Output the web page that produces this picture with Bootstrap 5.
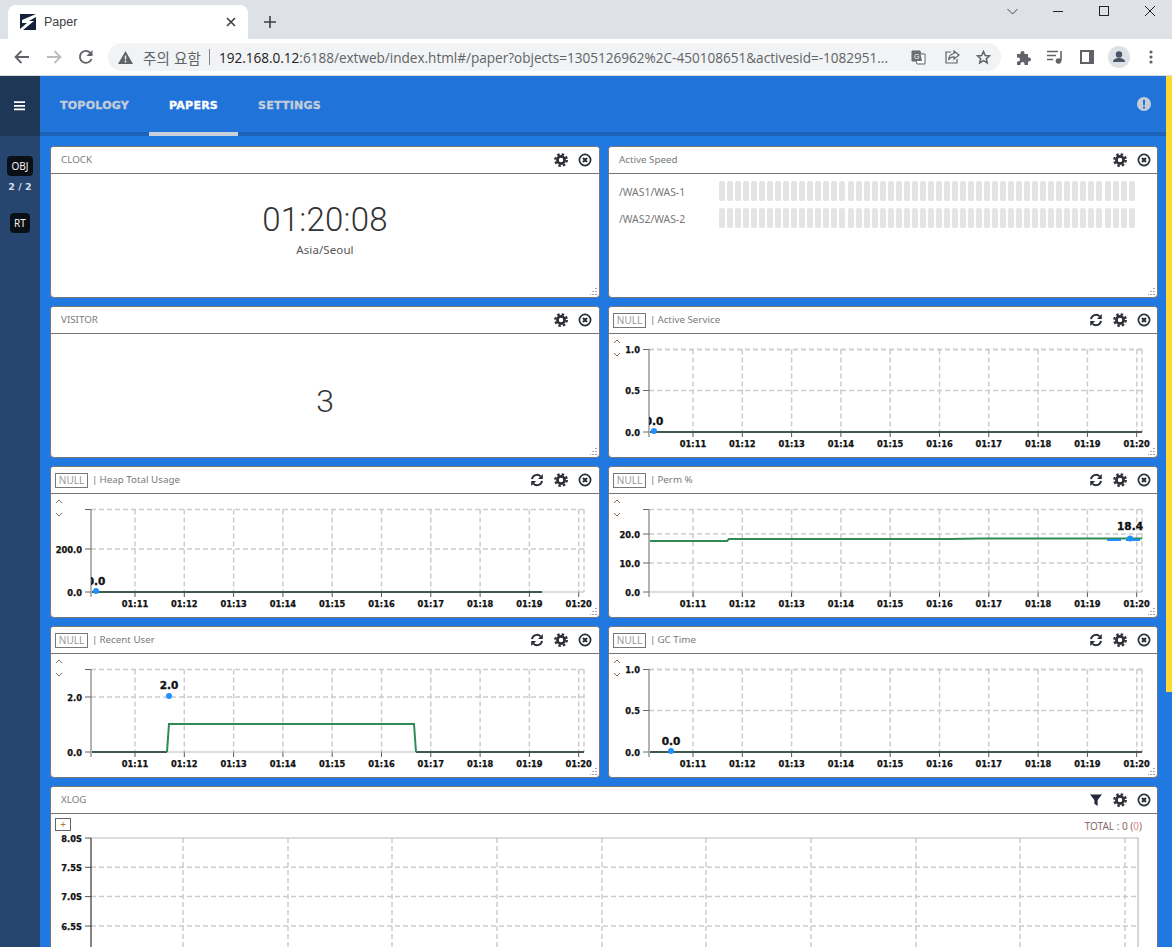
<!DOCTYPE html>
<html lang="ko">
<head>
<meta charset="utf-8">
<title>Paper</title>
<link href="https://cdn.jsdelivr.net/npm/bootstrap@5.3.0/dist/css/bootstrap.min.css" rel="stylesheet">
<style>
html,body{height:947px;overflow:hidden}
body{font-family:"Noto Sans","Liberation Sans",sans-serif;background:#2079e0;color:#333}
.tabstrip{height:39px;background:#dee1e6;position:relative}
.browser-tab{width:240px;height:34px;margin:5px 0 0 8px;background:#fff;border-radius:8px 8px 0 0;padding:0 8px 0 12px;font:12.5px "Liberation Sans",sans-serif;color:#3c4043}
.newtab{margin-left:16px}
.winbtns{margin-left:auto}
.winbtn{width:46px;height:22px;display:flex;align-items:center;justify-content:center;padding-left:2px}
.toolbar{height:37px;background:#fff;border-bottom:1px solid #dadce0;padding:0 0 0 6px}
.tbtn{width:32px;height:28px;display:flex;align-items:center;justify-content:center;flex:none}
.omnibox{width:893px;height:28px;margin:0 6px 0 6px;background:#f1f3f4;border-radius:14px;padding:0 2px 0 10px;font:14px "Open Sans","Noto Sans CJK KR",sans-serif;color:#5f6368;white-space:nowrap}
.warn-label{font-family:"Noto Sans CJK KR",sans-serif;font-size:14.5px;margin-left:10px;letter-spacing:.1px}
.sep{width:1px;height:16px;background:#80868b;margin:0 9px 0 8px}
.urltext{width:675px;overflow:hidden;letter-spacing:-.02px;font-size:13.6px}
.urltext b{font-weight:400;color:#202124}
.omni-icons{margin-left:auto}
.share-ic{margin-left:19px}
.appwrap{height:871px;overflow:hidden}
.sidebar{width:40px;background:#264670;flex:none}
.menu-toggle{height:60px;background:#1f3757}
.obj-badge{background:#0a0f16;color:#f2f2f2;font-size:10px;border-radius:4px;height:20px;display:flex;align-items:center;justify-content:center;font-family:"Noto Sans",sans-serif}
.obj-w{width:26px;margin:20px auto 0}
.rt-w{width:20px;margin:20px auto 0}
.obj-count{font:700 9.5px "DejaVu Sans",sans-serif;color:#d8dee8;text-align:center;margin-top:5px;height:12px;line-height:12px}
.mainarea{flex:1;min-width:0;overflow:hidden}
.topnav{height:60px;background:#2074d9;border-bottom:4px solid #1c63b8;padding:0}
.toplink{display:block;height:60px;padding:0 20px;font:800 11px/59px "DejaVu Sans",sans-serif;letter-spacing:.25px;-webkit-text-stroke:.35px currentColor;color:#c3ccd9;text-decoration:none;position:relative}
.toplink.cur{color:#fff;border-bottom:4px solid #c8d0dc}
.alertdot{margin:21px 15px 0 auto}
.stripe{width:6px;height:616px;background:#fdd835;flex:none}
.paper-area{padding:10px 8px 0 10px}
.sheet{height:152px;border:1px solid #777;border-radius:4px;background:#fff;overflow:hidden;position:relative}
.sheet-head{height:27px;border-bottom:1px solid #777;background:#fff;padding:0 7px 0 10px;font-size:9.8px;color:#7a7a7a;border-radius:0}
.col-6:nth-child(even) .sheet-head,.col-12 .sheet-head{padding-right:6px}
.sheet-head.hasnull{padding-left:4px}
.nullbtn{border:1px solid #777;height:15px;width:33px;font-size:10px;line-height:13px;text-align:center;color:#999;margin-right:4px}
.bar-sep{margin-right:2px;color:#777}
.iconset{margin-left:auto;gap:10px}
.hicon{width:14px;height:14px;display:block}
.grip{position:absolute;right:2px;bottom:2px;width:7px;height:7px}
.clockface{height:123px;text-align:center;padding-top:27px}
.clocktime{font:300 33px/38px Roboto,sans-serif;color:#333;letter-spacing:.25px}
.clockzone{font-size:11.5px;color:#555;margin-top:4px;line-height:14px;letter-spacing:.1px}
.visitorval{font:300 32px/38px Roboto,sans-serif;color:#333;text-align:center;padding-top:48px}
.speedrow{height:20px;margin-bottom:7px;padding-left:10px;font-size:10.4px;color:#777}
.speedlabel{width:100px;flex:none;padding-top:4px}
.speedbars{width:416px;height:20px;justify-content:space-between}
.speedbars i{display:block;width:6px;height:20px;border-radius:2px;background:#e4e4e4}
.speedlist{padding-top:7px}
.plotbox{height:123px;position:relative}
.plotsvg{display:block;position:absolute;left:0;top:0}
.plotsvg text{font:700 8.3px "DejaVu Sans",sans-serif;fill:#111;stroke:#111;stroke-width:.25px}
.plotsvg text.big{font-size:10.5px;stroke-width:.35px}
.updown{position:absolute;left:4px;top:3px;width:8px}
.xlog-sheet{height:400px}
.addbtn{position:absolute;left:4px;top:4px;width:16px;height:13px;border:1px solid #666;font-size:10px;line-height:10px;text-align:center;color:#b7791f}
.xtotal{position:absolute;right:15px;top:5px;font-size:10px;color:#8a6a6a}
.xtotal span{color:#e88}
</style>
</head>
<body>
<svg width="0" height="0" class="position-absolute">
<defs>
<clipPath id="plotclip"><rect x="40" y="0" width="500" height="123"/></clipPath>
<symbol id="i-gear" viewBox="0 0 14 14"><circle cx="7" cy="7" r="3.6" fill="none" stroke="#2a2f36" stroke-width="2.7"/><circle cx="7" cy="7" r="5.8" fill="none" stroke="#2a2f36" stroke-width="2.2" stroke-dasharray="2.5 2.05"/></symbol>
<symbol id="i-close" viewBox="0 0 14 14"><circle cx="7" cy="7" r="5.6" fill="none" stroke="#2a2f36" stroke-width="1.7"/><path d="M5 5l4 4M9 5l-4 4" stroke="#2a2f36" stroke-width="2.1"/></symbol>
<symbol id="i-sync" viewBox="0 0 14 14"><path d="M2 6.2A5 5 0 0 1 10.6 3.4" fill="none" stroke="#2a2f36" stroke-width="1.9"/><path d="M12.8 1v5H8z" fill="#2a2f36"/><path d="M12 7.8A5 5 0 0 1 3.4 10.6" fill="none" stroke="#2a2f36" stroke-width="1.9"/><path d="M1.2 13V8h5z" fill="#2a2f36"/></symbol>
<symbol id="i-funnel" viewBox="0 0 14 14"><path d="M1 1.5h12L8.6 7v6L5.4 10.8V7z" fill="#22283a"/></symbol>
</defs>
</svg>

<div class="tabstrip d-flex align-items-start">
  <div class="browser-tab d-flex align-items-center">
    <svg width="16" height="16" viewBox="0 0 16 16"><rect width="16" height="16" fill="#16213a"/><path d="M16 0v3L9 7h5L3 16H0v-1l7-6H2V6z" fill="#fff"/><path d="M3 3l4-3H3zM13 13l-4 3h4z" fill="#16213a"/></svg>
    <span class="ms-2">Paper</span>
    <svg class="ms-auto me-1" width="10" height="10" viewBox="0 0 10 10"><path d="M1 1l8 8M9 1l-8 8" stroke="#3c4043" stroke-width="1.6"/></svg>
  </div>
  <svg class="newtab mt-3" width="12" height="12" viewBox="0 0 12 12"><path d="M6 0v12M0 6h12" stroke="#3c4043" stroke-width="1.6"/></svg>
  <div class="winbtns d-flex">
    <div class="winbtn"><svg width="11" height="7" viewBox="0 0 11 7"><path d="M.5 1l5 5 5-5" fill="none" stroke="#444" /></svg></div>
    <div class="winbtn"><svg width="10" height="1" viewBox="0 0 10 1"><path d="M0 .5h10" stroke="#222"/></svg></div>
    <div class="winbtn"><svg width="10" height="10" viewBox="0 0 10 10"><rect x=".5" y=".5" width="9" height="9" fill="none" stroke="#222"/></svg></div>
    <div class="winbtn"><svg width="10" height="10" viewBox="0 0 10 10"><path d="M0 0l10 10M10 0L0 10" stroke="#222"/></svg></div>
  </div>
</div>

<div class="toolbar d-flex align-items-center">
  <div class="tbtn"><svg width="16" height="14" viewBox="0 0 16 14"><path d="M15 7H2M7.500 1L1.500 7l6 6" fill="none" stroke="#5f6368" stroke-width="1.8"/></svg></div>
  <div class="tbtn"><svg width="16" height="14" viewBox="0 0 16 14"><path d="M1 7h13M8.500 1l6 6-6 6" fill="none" stroke="#babcbe" stroke-width="1.8"/></svg></div>
  <div class="tbtn"><svg width="16" height="16" viewBox="0 0 16 16"><path d="M13.500 10A6 6 0 1 1 12.300 3.800" fill="none" stroke="#5f6368" stroke-width="1.800"/><path d="M14.500 1v6h-6z" fill="#5f6368"/></svg></div>
  <div class="omnibox d-flex align-items-center">
    <svg width="15" height="13" viewBox="0 0 15 13"><path d="M7.500 0L15 13H0z" fill="#5f6368"/><path d="M7.500 4.500v4M7.500 9.500v2" stroke="#f1f3f4" stroke-width="1.400"/></svg>
    <span class="warn-label">주의 요함</span><span class="sep"></span>
    <span class="urltext"><b>192.168.0.12</b>:6188/extweb/index.html#/paper?objects=1305126962%2C-450108651&amp;activesid=-1082951...</span>
    <span class="omni-icons d-flex align-items-center">
    <svg width="15" height="15" viewBox="0 0 15 15"><path d="M1 1h8l1 3h4v10H6l-1-3H1z" fill="#fff" stroke="#5f6368"/><path d="M1 1h8l2 10H1z" fill="#6a6e73"/><text x="3" y="9" font-size="7" fill="#fff" font-family="Liberation Sans">G</text></svg>
    <svg class="share-ic" width="15" height="14" viewBox="0 0 15 14"><path d="M6 2H1v11h11V9" fill="none" stroke="#5f6368" stroke-width="1.200"/><path d="M9 1l5 4-5 4V6.800C6 6.800 4.500 8 3.500 10 3.800 6.500 6 4 9 3.500z" fill="none" stroke="#5f6368" stroke-width="1.200"/></svg>
    <svg class="ms-3 me-2" width="15" height="15" viewBox="0 0 15 15"><path d="M7.500 1.500l1.800 4 4.200.4-3.200 2.800 1 4.200-3.800-2.300-3.800 2.300 1-4.200L1.500 5.900l4.200-.4z" fill="none" stroke="#5f6368" stroke-width="1.500"/></svg>
    </span>
  </div>
  <div class="tbtn"><svg width="15" height="15" viewBox="0 0 15 15"><path d="M1 4h3.500V3a2 2 0 0 1 4 0v1H12v3.500h1a2 2 0 0 1 0 4h-1V15H8.500v-1a2 2 0 0 0-4 0v1H1v-3.500h1a2 2 0 0 0 0-4H1z" fill="#5f6368"/></svg></div>
  <div class="tbtn"><svg width="16" height="14" viewBox="0 0 16 14"><path d="M0 1.500h11M0 5.500h9M0 9.500h6" stroke="#5f6368" stroke-width="1.300"/><path d="M14 1v9.500" stroke="#5f6368" stroke-width="1.600"/><circle cx="11.500" cy="11" r="2.800" fill="#5f6368"/></svg></div>
  <div class="tbtn"><svg width="14" height="14" viewBox="0 0 14 14"><rect x="0" y="0" width="14" height="14" fill="#5f6368"/><rect x="2" y="2" width="7" height="10" fill="#fff"/></svg></div>
  <div class="tbtn"><svg width="22" height="22" viewBox="0 0 22 22"><circle cx="11" cy="11" r="11" fill="#dee1e6"/><circle cx="11" cy="8.500" r="3.200" fill="#4a5568"/><path d="M5 16c0-3 3-4 6-4s6 1 6 4z" fill="#4a5568"/></svg></div>
  <div class="tbtn"><svg width="4" height="14" viewBox="0 0 4 14"><circle cx="2" cy="2" r="1.600" fill="#5f6368"/><circle cx="2" cy="7" r="1.600" fill="#5f6368"/><circle cx="2" cy="12" r="1.600" fill="#5f6368"/></svg></div>
</div>

<div class="appwrap d-flex">
  <aside class="sidebar">
    <div class="menu-toggle d-flex align-items-center justify-content-center"><svg width="12" height="10" viewBox="0 0 12 10"><path d="M0 1.200h11M0 4.800h11M0 8.400h11" stroke="#fff" stroke-width="1.800"/></svg></div>
    <div class="obj-badge obj-w">OBJ</div>
    <div class="obj-count">2 / 2</div>
    <div class="obj-badge rt-w">RT</div>
  </aside>
  <div class="mainarea">
    <nav class="topnav d-flex align-items-start">
      <a class="toplink" href="#">TOPOLOGY</a>
      <a class="toplink cur" href="#">PAPERS</a>
      <a class="toplink" href="#">SETTINGS</a>
      <svg class="alertdot" width="14" height="14" viewBox="0 0 14 14"><circle cx="7" cy="7" r="7" fill="#c5cdd8"/><path d="M7 2.800v5.400M7 9.500v2" stroke="#2074d9" stroke-width="2"/></svg>
    </nav>
    <div class="paper-area">
      <div class="row gx-2 gy-2" id="sheets"></div>
    </div>
  </div>
  <div class="stripe"></div>
</div>

<script>
var useI=function(n){return '<svg class="hicon"><use href="#i-'+n+'"/></svg>'};
function head(title,nul,icons){
  return '<div class="sheet-head d-flex align-items-center'+(nul?' hasnull':'')+'">'+
   (nul?'<span class="nullbtn">NULL</span><span class="bar-sep">|</span> ':'')+
   '<span>'+title+'</span><span class="iconset d-flex">'+icons.map(useI).join('')+'</span></div>';
}
var grip='<svg class="grip" viewBox="0 0 7 7"><path d="M6 0v1M6 3v1M6 6v1M3 3v1M3 6v1M0 6v1" stroke="#555"/></svg>';
var updown='<svg class="updown" height="22" viewBox="0 0 8 22"><path d="M1 6l3-3 3 3M1 16l3 3 3-3" fill="none" stroke="#8a6d4b"/></svg>';
function plot(o){
  var top=15.5,bot=98,ax=40,right=533,s='';
  var dash='stroke="#ccc" stroke-width="1.500" stroke-dasharray="5 3"';
  var ts=['01:11','01:12','01:13','01:14','01:15','01:16','01:17','01:18','01:19','01:20'];
  ts.forEach(function(t,i){var x=84+i*49.3;
    s+='<path d="M'+x+' '+top+'V'+bot+'" '+dash+'/><path d="M'+x+' '+bot+'v5" stroke="#555"/>';
    s+='<text x="'+x+'" y="'+(bot+15)+'" text-anchor="middle">'+t+'</text>';});
  s+='<path d="M'+right+' '+top+'V'+bot+'" '+dash+'/>';
  s+='<path d="M'+ax+' '+top+'H'+right+'" '+dash+'/>';
  o.y.forEach(function(v){
    if(v[0]!==bot) s+='<path d="M'+ax+' '+v[0]+'H'+right+'" '+dash+'/>';
    s+='<path d="M'+(ax-6)+' '+v[0]+'H'+ax+'" stroke="#666"/>';
    s+='<text x="'+(ax-9)+'" y="'+(v[0]+3.500)+'" text-anchor="end">'+v[1]+'</text>';});
  s+='<path d="M'+(ax-6)+' '+top+'H'+ax+'V'+(bot+5)+'" fill="none" stroke="#666"/>';
  s+='<path d="M'+ax+' '+bot+'H'+right+'" stroke="#bbb"/>';
  if(o.base)s+='<path d="'+o.base+'" fill="none" stroke="#3f5a4c" stroke-width="2"/>';
  if(o.line)s+='<path d="'+o.line+'" fill="none" stroke="#2e8b57" stroke-width="2"/>';
  if(o.extra)s+=o.extra;
  if(o.dot)s+='<circle cx="'+o.dot[0]+'" cy="'+o.dot[1]+'" r="3" fill="#1e90ff"'+(o.clip?' clip-path="url(#plotclip)"':'')+'/>';
  if(o.lab)s+='<text class="big" x="'+o.lab[0]+'" y="'+o.lab[1]+'" text-anchor="middle"'+(o.clip?' clip-path="url(#plotclip)"':'')+'>'+o.lab[2]+'</text>';
  return '<div class="plotbox">'+updown+'<svg class="plotsvg" width="548" height="123">'+s+'</svg></div>';
}
function card(inner,cls){return '<div class="col-6"><div class="card sheet '+(cls||'')+'">'+inner+grip+'</div></div>'}
var bars='';for(var i=0;i<52;i++)bars+='<i></i>';
function row(n){return '<div class="speedrow d-flex align-items-center"><span class="speedlabel">'+n+'</span><span class="speedbars d-flex">'+bars+'</span></div>'}
var h='';
h+=card(head('CLOCK',0,['gear','close'])+'<div class="clockface"><div class="clocktime">01:20:08</div><div class="clockzone">Asia/Seoul</div></div>');
h+=card(head('Active Speed',0,['gear','close'])+'<div class="speedlist">'+row('/WAS1/WAS-1')+row('/WAS2/WAS-2')+'</div>');
h+=card(head('VISITOR',0,['gear','close'])+'<div class="visitorval">3</div>');
h+=card(head('Active Service',1,['sync','gear','close'])+plot({y:[[15.500,'1.0'],[56.500,'0.5'],[98,'0.0']],base:'M41 98H533',dot:[45,97],lab:[45,91,'0.0'],clip:1}));
h+=card(head('Heap Total Usage',1,['sync','gear','close'])+plot({y:[[55,'200.0'],[98,'0.0']],base:'M41 98H491',dot:[45,97],lab:[45,91,'0.0'],clip:1}));
h+=card(head('Perm %',1,['sync','gear','close'])+plot({y:[[40,'20.0'],[69,'10.0'],[98,'0.0']],line:'M41 47H118L120 45H340L372 44.500H533',extra:'<path d="M498 46H533" stroke="#1e90ff" stroke-width="2" stroke-dasharray="14 5"/>',dot:[521,44.500],lab:[521,36,'18.4']}));
h+=card(head('Recent User',1,['sync','gear','close'])+plot({y:[[43,'2.0'],[98,'0.0']],base:'M41 98H116M365 98H533',line:'M116 98L118 70H363L365 98',dot:[118,42],lab:[118,35,'2.0']}));
h+=card(head('GC Time',1,['sync','gear','close'])+plot({y:[[15.500,'1.0'],[56.500,'0.5'],[98,'0.0']],base:'M41 98H533',dot:[62,97],lab:[62,91,'0.0']}));
var vs=[183,288,392,497,602,706,811,916,1020,1125];
var xs='';
vs.forEach(function(v){xs+='<path d="M'+(v-51)+' 24V400" stroke="#ccc" stroke-width="1.500" stroke-dasharray="5 3"/>'});
[['8.0S',24],['7.5S',53.300],['7.0S',82.600],['6.5S',112]].forEach(function(v,i){
  xs+='<path d="M34 '+v[1]+'H40" stroke="#555"/><text x="31" y="'+(v[1]+3.500)+'" text-anchor="end">'+v[0]+'</text>';
  if(i)xs+='<path d="M40 '+v[1]+'H1087" stroke="#ccc" stroke-width="1.500" stroke-dasharray="5 3"/>';});
xs+='<path d="M40 24H1087V400" fill="none" stroke="#bbb" stroke-width="1.200"/><path d="M40 24V400" stroke="#333" stroke-width="1.200"/>';
var x='<div class="col-12"><div class="card sheet xlog-sheet">'+head('XLOG',0,['funnel','gear','close'])+
  '<div class="plotbox"><svg class="plotsvg" width="1106" height="400">'+xs+'</svg><div class="addbtn">+</div><div class="xtotal">TOTAL : 0 (<span>0</span>)</div></div></div></div>';
document.getElementById('sheets').innerHTML=h+x;
</script>
<script src="https://cdn.jsdelivr.net/npm/bootstrap@5.3.0/dist/js/bootstrap.bundle.min.js"></script>
</body>
</html>
